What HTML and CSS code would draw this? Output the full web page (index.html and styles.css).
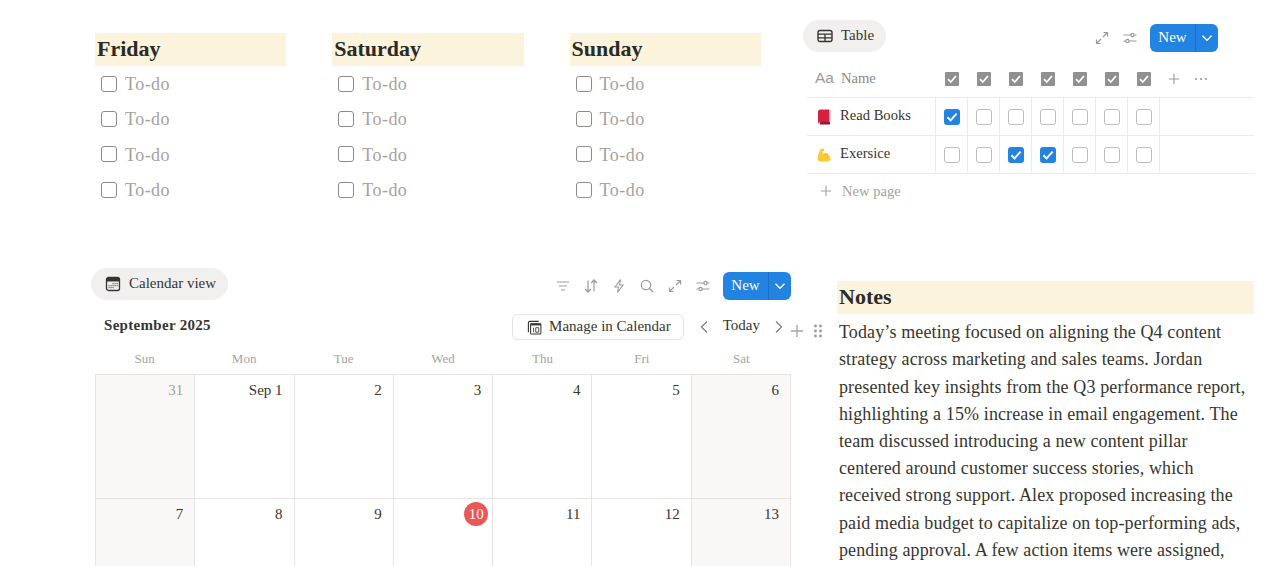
FILE: index.html
```html
<!DOCTYPE html>
<html lang="en">
<head>
    <meta charset="UTF-8">
    <title>Weekly Planner</title>
    <link rel="stylesheet" href="styles.css">
</head>
<body>
    <svg class="sprites" width="0" height="0">
        <symbol id="i-expand" viewBox="0 0 16 16"><path d="M9.500 2.500h4v4M13.500 2.500l-4.500 4.500M6.500 13.500h-4v-4M2.500 13.500l4.500-4.500" fill="none" stroke="currentColor" stroke-width="1.200"/></symbol>
        <symbol id="i-sliders" viewBox="0 0 16 16"><path d="M1.500 5h7.500M12 5h2.500M1.500 11h2.500M7 11h7.500" fill="none" stroke="currentColor" stroke-width="1.200"/><circle cx="10.500" cy="5" r="1.600" fill="none" stroke="currentColor" stroke-width="1.200"/><circle cx="5.500" cy="11" r="1.600" fill="none" stroke="currentColor" stroke-width="1.200"/></symbol>
        <symbol id="i-chev" viewBox="0 0 12 12"><path d="M1.500 3.800L6 8.300l4.500-4.500" fill="none" stroke="currentColor" stroke-width="1.500"/></symbol>
        <symbol id="i-tick" viewBox="0 0 14 14"><path d="M3 7.200l2.800 2.800L11 4" fill="none" stroke="currentColor" stroke-width="1.700"/></symbol>
        <symbol id="i-plus" viewBox="0 0 14 14"><path d="M7 1v12M1 7h12" fill="none" stroke="currentColor" stroke-width="1.300"/></symbol>
    </svg>

    <main class="page">
        <!-- Days -->
        <section class="days">
            <div class="day">
                <h3 class="hl-head">Friday</h3>
                <div class="todo"><span class="box"></span>To-do</div>
                <div class="todo"><span class="box"></span>To-do</div>
                <div class="todo"><span class="box"></span>To-do</div>
                <div class="todo"><span class="box"></span>To-do</div>
            </div>
            <div class="day">
                <h3 class="hl-head">Saturday</h3>
                <div class="todo"><span class="box"></span>To-do</div>
                <div class="todo"><span class="box"></span>To-do</div>
                <div class="todo"><span class="box"></span>To-do</div>
                <div class="todo"><span class="box"></span>To-do</div>
            </div>
            <div class="day">
                <h3 class="hl-head">Sunday</h3>
                <div class="todo"><span class="box"></span>To-do</div>
                <div class="todo"><span class="box"></span>To-do</div>
                <div class="todo"><span class="box"></span>To-do</div>
                <div class="todo"><span class="box"></span>To-do</div>
            </div>
        </section>

        <!-- Habit table -->
        <section class="habits">
            <div class="view-bar">
                <span class="pill">
                    <svg class="pill-icon" viewBox="0 0 16 16"><rect x="1" y="2.500" width="14" height="11" rx="2" fill="none" stroke="currentColor" stroke-width="1.400"/><path d="M1 6.200h14M1 9.800h14M8 6.200v7.300" fill="none" stroke="currentColor" stroke-width="1.300"/></svg>
                    Table
                </span>
                <div class="tools tools-table">
                    <svg class="tool"><use href="#i-expand"/></svg>
                    <svg class="tool"><use href="#i-sliders"/></svg>
                    <span class="new-btn"><span class="new-label">New</span><span class="new-arrow"><svg><use href="#i-chev"/></svg></span></span>
                </div>
            </div>
            <div class="row row-head">
                <div class="name-cell head-name"><span class="aa">Aa</span>Name</div>
                <div class="col-head"><svg><use href="#i-tick"/></svg></div>
                <div class="col-head"><svg><use href="#i-tick"/></svg></div>
                <div class="col-head"><svg><use href="#i-tick"/></svg></div>
                <div class="col-head"><svg><use href="#i-tick"/></svg></div>
                <div class="col-head"><svg><use href="#i-tick"/></svg></div>
                <div class="col-head"><svg><use href="#i-tick"/></svg></div>
                <div class="col-head"><svg><use href="#i-tick"/></svg></div>
                <svg class="head-plus"><use href="#i-plus"/></svg>
                <svg class="head-dots" viewBox="0 0 14 4"><g fill="currentColor"><circle cx="2" cy="2" r="1.100"/><circle cx="7" cy="2" r="1.100"/><circle cx="12" cy="2" r="1.100"/></g></svg>
            </div>
            <div class="row">
                <div class="name-cell">
                    <svg class="emoji" viewBox="0 0 14 16"><path d="M1 3a2.500 2.500 0 0 1 2.500-2.500H12.500v12.500H3.500A2.500 2.500 0 0 0 1 15z" fill="#d5213f"/><path d="M3.500 13H13v2.500H3.500a1.300 1.300 0 0 1 0-2.500z" fill="#8f1a30"/><path d="M12 1h1.500v12H12z" fill="#f2a3ae"/></svg>
                    Read Books
                </div>
                <div class="cell"><span class="check on"><svg><use href="#i-tick"/></svg></span></div>
                <div class="cell"><span class="check"></span></div>
                <div class="cell"><span class="check"></span></div>
                <div class="cell"><span class="check"></span></div>
                <div class="cell"><span class="check"></span></div>
                <div class="cell"><span class="check"></span></div>
                <div class="cell"><span class="check"></span></div>
            </div>
            <div class="row">
                <div class="name-cell">
                    <svg class="emoji" viewBox="0 0 14 14"><path d="M3.500 1L6.800 .6 7.500 2.300 5.600 3.300 5.600 6.800C7 5.700 9.400 5.500 11 6.500 13 7.600 13.800 9.500 13.400 11.200 13 13 11 13.600 8.500 13.600 5 13.600 2 13.400 .8 12.500 .2 10 1.500 4.500 3.500 1z" fill="#fcc934"/><path d="M5.600 6.800C7 5.700 9.400 5.500 11 6.500" fill="none" stroke="#e39d1b" stroke-width=".8"/></svg>
                    Exersice
                </div>
                <div class="cell"><span class="check"></span></div>
                <div class="cell"><span class="check"></span></div>
                <div class="cell"><span class="check on"><svg><use href="#i-tick"/></svg></span></div>
                <div class="cell"><span class="check on"><svg><use href="#i-tick"/></svg></span></div>
                <div class="cell"><span class="check"></span></div>
                <div class="cell"><span class="check"></span></div>
                <div class="cell"><span class="check"></span></div>
            </div>
            <div class="new-page"><svg><use href="#i-plus"/></svg>New page</div>
        </section>

        <!-- Calendar -->
        <section class="calendar">
            <div class="view-bar">
                <span class="pill">
                    <svg class="pill-icon" viewBox="0 0 16 16"><rect x="1.500" y="1.500" width="13" height="13" rx="2" fill="none" stroke="currentColor" stroke-width="1.300"/><path d="M1.500 3a1.500 1.500 0 0 1 1.500-1.500h10A1.500 1.500 0 0 1 14.500 3v2.500h-13z" fill="currentColor"/><g fill="#6b6964"><rect x="7.500" y="7" width="1.200" height="1.200"/><rect x="9.500" y="7" width="1.200" height="1.200"/><rect x="11.500" y="7" width="1.200" height="1.200"/><rect x="3.500" y="9" width="1.200" height="1.200"/><rect x="5.500" y="9" width="1.200" height="1.200"/><rect x="7.500" y="9" width="1.200" height="1.200"/><rect x="9.500" y="9" width="1.200" height="1.200"/><rect x="11.500" y="9" width="1.200" height="1.200"/><rect x="3.500" y="11" width="1.200" height="1.200"/><rect x="5.500" y="11" width="1.200" height="1.200"/><rect x="7.500" y="11" width="1.200" height="1.200"/></g></svg>
                    Calendar view
                </span>
                <div class="tools tools-cal">
                    <svg class="tool" viewBox="0 0 16 16"><path d="M2 4h12M4 8h8M6 12h4" fill="none" stroke="currentColor" stroke-width="1.200"/></svg>
                    <svg class="tool" viewBox="0 0 16 16"><path d="M5 14V2.500M2.200 11L5 14l2.800-3M11 13.500V2M8.200 5L11 2l2.800 3" fill="none" stroke="currentColor" stroke-width="1.200"/></svg>
                    <svg class="tool" viewBox="0 0 16 16"><path d="M9.500 1.500L4 9h3.500L6.500 14.500 12 7H8.500z" fill="none" stroke="currentColor" stroke-width="1.100"/></svg>
                    <svg class="tool" viewBox="0 0 16 16"><circle cx="7" cy="7" r="4.700" fill="none" stroke="currentColor" stroke-width="1.200"/><path d="M10.500 10.500L14 14" stroke="currentColor" stroke-width="1.200"/></svg>
                    <svg class="tool"><use href="#i-expand"/></svg>
                    <svg class="tool"><use href="#i-sliders"/></svg>
                    <span class="new-btn"><span class="new-label">New</span><span class="new-arrow"><svg><use href="#i-chev"/></svg></span></span>
                </div>
            </div>
            <div class="cal-head">
                <span class="month">September 2025</span>
                <span class="manage">
                    <svg viewBox="0 0 16 16"><path d="M1.500 13V3A1.500 1.500 0 0 1 3 1.500h9.500" fill="none" stroke="#37352f" stroke-width="1.200"/><rect x="3.800" y="4" width="11" height="11" rx="1" fill="none" stroke="#37352f" stroke-width="1.100"/><path d="M3.800 4.800h11" stroke="#37352f" stroke-width="2"/><path d="M7 8.200v4.800M9.300 8.200h3.200v4.800H9.300z" fill="none" stroke="#37352f" stroke-width=".9"/></svg>
                    Manage in Calendar
                </span>
                <svg class="nav-arrow prev" viewBox="0 0 10 14"><path d="M8 1.500L2.500 7 8 12.500" fill="none" stroke="currentColor" stroke-width="1.200"/></svg>
                <span class="today">Today</span>
                <svg class="nav-arrow" viewBox="0 0 10 14"><path d="M2 1.500L7.500 7 2 12.500" fill="none" stroke="currentColor" stroke-width="1.200"/></svg>
            </div>
            <div class="weekdays">
                <span>Sun</span><span>Mon</span><span>Tue</span><span>Wed</span><span>Thu</span><span>Fri</span><span>Sat</span>
            </div>
            <div class="month-grid">
                <div class="date weekend muted">31</div>
                <div class="date">Sep 1</div>
                <div class="date">2</div>
                <div class="date">3</div>
                <div class="date">4</div>
                <div class="date">5</div>
                <div class="date weekend">6</div>
                <div class="date weekend">7</div>
                <div class="date">8</div>
                <div class="date">9</div>
                <div class="date"><span class="now">10</span></div>
                <div class="date">11</div>
                <div class="date">12</div>
                <div class="date weekend">13</div>
            </div>
            <!-- row handle next to the calendar -->
            <svg class="add-block"><use href="#i-plus"/></svg>
            <svg class="drag" viewBox="0 0 10 16"><g fill="#9b9a97"><circle cx="2.500" cy="3" r="1.400"/><circle cx="7.500" cy="3" r="1.400"/><circle cx="2.500" cy="8" r="1.400"/><circle cx="7.500" cy="8" r="1.400"/><circle cx="2.500" cy="13" r="1.400"/><circle cx="7.500" cy="13" r="1.400"/></g></svg>
        </section>

        <!-- Notes -->
        <section class="notes">
            <h3 class="hl-head">Notes</h3>
            <p>Today’s meeting focused on aligning the Q4 content<br>
            strategy across marketing and sales teams. Jordan<br>
            presented key insights from the Q3 performance report,<br>
            highlighting a 15% increase in email engagement. The<br>
            team discussed introducing a new content pillar<br>
            centered around customer success stories, which<br>
            received strong support. Alex proposed increasing the<br>
            paid media budget to capitalize on top-performing ads,<br>
            pending approval. A few action items were assigned,</p>
        </section>
    </main>
</body>
</html>
```
FILE: styles.css
```css
* {
    box-sizing: border-box;
}
html, body {
    height: 566px;
    overflow: hidden;
}
body {
    margin: 0;
    background: #fff;
    color: #37352f;
    font-family: "Liberation Serif", serif;
}
.sprites {
    position: absolute;
}
.page {
    display: grid;
    grid-template-columns: 712px 1fr;
    grid-template-rows: 248px 298px;
    height: 566px;
    overflow: hidden;
    padding: 20px 26px 0 91px;
}
.hl-head {
    margin: 0;
    height: 33px;
    padding-left: 2px;
    background: #fbf3db;
    color: #2b2a26;
    font-size: 22px;
    line-height: 31px;
    font-weight: bold;
}

/* days */
.days {
    display: grid;
    grid-template-columns: repeat(3, 191.300px);
    column-gap: 46px;
    align-content: start;
    padding: 13px 0 0 4px;
}
.todo {
    display: flex;
    align-items: center;
    gap: 8px;
    height: 35.300px;
    padding: 2px 0 0 6px;
    color: #a5a29d;
    font-size: 18px;
    letter-spacing: .45px;
}
.box {
    width: 16px;
    height: 16px;
    margin-top: -2px;
    border: 1.500px solid #8d8b87;
    border-radius: 3px;
}

/* toolbar shared by both views */
.view-bar {
    display: flex;
    align-items: flex-start;
    justify-content: space-between;
}
.pill {
    display: flex;
    align-items: center;
    gap: 8px;
    height: 32px;
    padding: 0 12px 2px 14px;
    border-radius: 16px;
    background: #f1f0ee;
    font-size: 15px;
}
.pill-icon {
    width: 16px;
    height: 16px;
    margin-top: 2px;
    color: #37352f;
}
.tools {
    display: flex;
    align-items: center;
    height: 28px;
    margin-top: 4px;
    margin-right: 12px;
    color: #9b9a97;
}
.tools-table {
    margin-right: 36px;
}
.tool {
    width: 16px;
    height: 16px;
    margin-right: 12px;
}
.new-btn {
    display: flex;
    height: 28px;
    border-radius: 6px;
    overflow: hidden;
    background: #2383e2;
    color: #fff;
    font-size: 15px;
}
.new-label {
    width: 45px;
    line-height: 26px;
    text-align: center;
}
.new-arrow {
    width: 23px;
    border-left: 1px solid #1b70c4;
    display: flex;
    align-items: center;
    justify-content: center;
}
.new-arrow svg {
    width: 12px;
    height: 12px;
}

/* habit table */
.habits {
    position: relative;
}
.row {
    display: flex;
    margin-left: 4px;
    height: 38px;
    border-bottom: 1px solid #ebebea;
    font-size: 14.600px;
}
.row-head {
    height: 37px;
    margin-top: 9px;
    align-items: center;
    color: #8b8984;
}
.name-cell {
    display: flex;
    align-items: center;
    width: 128px;
    padding: 0 0 2px 10px;
    gap: 9px;
}
.head-name {
    width: 129px;
    gap: 7px;
    padding: 0 0 2px 8px;
}
.aa {
    font-family: "Liberation Sans", sans-serif;
    font-size: 15.500px;
    color: #9b9a97;
}
.emoji {
    width: 14px;
    height: 16px;
    margin-top: 2px;
}
.col-head {
    width: 32px;
    display: flex;
    justify-content: center;
}
.col-head svg {
    width: 14px;
    height: 14px;
    background: #91908b;
    color: #fff;
    border-radius: 1px;
}
.head-plus {
    width: 12px;
    height: 12px;
    margin-left: 8px;
    color: #9b9a97;
}
.head-dots {
    width: 14px;
    height: 4px;
    margin-left: 14px;
    color: #9b9a97;
}
.cell {
    width: 32px;
    display: flex;
    align-items: center;
    justify-content: center;
    border-left: 1px solid #ebebea;
}
.cell:last-child {
    border-right: 1px solid #ebebea;
    width: 33px;
}
.check {
    width: 16px;
    height: 16px;
    border: 1px solid #bdbcb9;
    border-radius: 3px;
}
.check.on {
    background: #2383e2;
    border: none;
    color: #fff;
}
.check svg {
    display: block;
    width: 16px;
    height: 16px;
}
.new-page {
    display: flex;
    align-items: center;
    gap: 10px;
    height: 34px;
    margin-left: 17px;
    color: #a5a29d;
    font-size: 14.600px;
}
.new-page svg {
    width: 12px;
    height: 12px;
}

/* calendar */
.calendar {
    position: relative;
}
.cal-head {
    display: flex;
    align-items: center;
    height: 28px;
    margin: 13px 19px 0 13px;
    font-size: 15px;
}
.cal-head > span {
    padding-bottom: 3px;
}
.month {
    font-weight: bold;
    flex: 1;
    letter-spacing: .3px;
}
.cal-head .manage {
    display: flex;
    align-items: center;
    gap: 7px;
    height: 26px;
    padding: 0 12px 2px 14px;
    border: 1px solid #e4e3e1;
    border-radius: 6px;
}
.manage svg {
    width: 15px;
    height: 15px;
    margin-top: 2px;
}
.nav-arrow {
    width: 10px;
    height: 14px;
    color: #7d7b77;
}
.nav-arrow.prev {
    margin-left: 15px;
}
.today {
    margin: 0 14px 0 14px;
}
.weekdays {
    display: grid;
    grid-template-columns: repeat(7, 1fr);
    height: 20px;
    margin: 10px 0 0 4px;
    width: 696px;
    color: #a5a29d;
    font-size: 13px;
    text-align: center;
}
.month-grid {
    display: grid;
    grid-template-columns: repeat(7, 1fr);
    grid-auto-rows: 124px;
    width: 696px;
    margin: 3px 0 0 4px;
    border-top: 1px solid #e5e4e2;
    border-left: 1px solid #e5e4e2;
}
.date {
    padding: 6px 11px 0 0;
    border-right: 1px solid #e5e4e2;
    border-bottom: 1px solid #e5e4e2;
    text-align: right;
    font-size: 15px;
    line-height: 18px;
}
.weekend {
    background: #f9f8f7;
}
.muted {
    color: #a5a29d;
}
.now {
    display: inline-block;
    width: 24px;
    height: 24px;
    margin: -3px -7px 0 0;
    border-radius: 50%;
    background: #eb5757;
    color: #fff;
    line-height: 24px;
    text-align: center;
    font-size: 15px;
}
.add-block {
    position: absolute;
    left: 699px;
    top: 56px;
    width: 14px;
    height: 14px;
    color: #a5a29d;
}
.drag {
    position: absolute;
    left: 722px;
    top: 55px;
    width: 10px;
    height: 16px;
}

/* notes */
.notes {
    padding: 13px 0 0 34px;
}
.notes p {
    margin: 5.200px 0 0 2px;
    font-size: 18px;
    line-height: 27.200px;
    letter-spacing: .12px;
    white-space: nowrap;
    color: #37352f;
}
```
